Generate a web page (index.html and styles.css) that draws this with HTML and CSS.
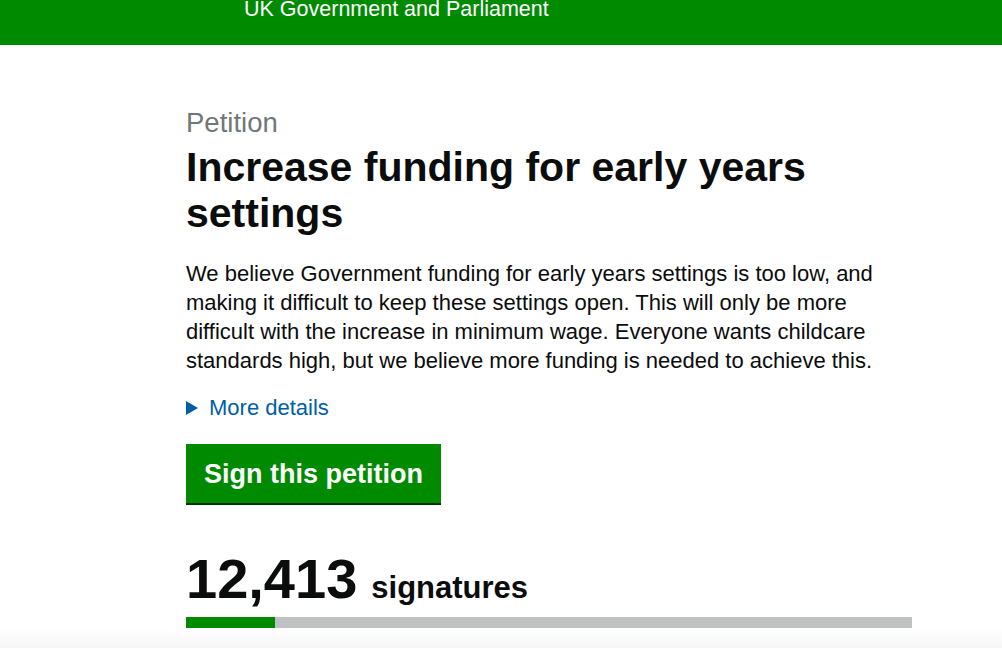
FILE: index.html
```html
<!doctype html>
<html lang="en">
    <head>
        <meta charset="utf-8">
        <title>Increase funding for early years settings - Petitions</title>
        <meta name="viewport" content="width=device-width, initial-scale=1">
        <link rel="stylesheet" href="styles.css">
    </head>
    <body>
        <header class="masthead">
            <div class="masthead-title">UK Government and Parliament</div>
        </header>
        <main class="petition">
            <span class="petition-label">Petition</span>
            <h1 class="petition-title">Increase funding for early years settings</h1>
            <p class="petition-action">
                We believe Government funding for early years settings is too low, and making it difficult to keep these settings open. This will only be more difficult with the increase in minimum wage. Everyone wants childcare standards high, but we believe more funding is needed to achieve this.
            </p>
            <div class="details-toggle">
                <span class="arrow"></span><a href="#">More details</a>
            </div>
            <a class="button" href="#">Sign this petition</a>
            <div class="signature-count">
                <span class="count">12,413</span>
                <span class="count-label">signatures</span>
            </div>
            <div class="progress">
                <div class="progress-fill" style="width: 12.3%;"></div>
            </div>
        </main>
        <div class="fade"></div>
    </body>
</html>
```

FILE: styles.css
```css
html {
    height: 100%;
    overflow: hidden;
}
body {
    margin: 0;
    background: #fff;
    color: #0b0c0c;
    font-family: "Liberation Sans", Arial, sans-serif;
}

.masthead {
    background: #008a00;
    height: 46px;
}
.masthead-title {
    color: white;
    font-size: 21.5px;
    line-height: 20px;
    padding-left: 244px;
    margin-top: -1px;
}

.petition {
    margin-left: 186px;
    width: 726px;
    padding-top: 62px;
}
.petition-label {
    display: block;
    color: #6f777b;
    font-size: 27.5px;
    line-height: 32px;
}
.petition-title {
    font-size: 41px;
    line-height: 46px;
    font-weight: bold;
    margin: 5px 0 0 0;
    padding-right: 60px;
}
.petition-action {
    font-size: 22px;
    line-height: 29px;
    margin: 23px 0 0 0;
}
.details-toggle {
    margin-top: 18px;
    font-size: 22px;
    line-height: 30px;
    display: flex;
    align-items: center;
}
.details-toggle a {
    color: #005ea5;
    text-decoration: none;
}
.arrow {
    width: 0;
    height: 0;
    border-top: 7px solid transparent;
    border-bottom: 7px solid transparent;
    border-left: 12px solid #005ea5;
    margin-right: 11px;
}
.button {
    display: inline-block;
    margin-top: 21px;
    background: #008a00;
    color: white;
    font-size: 27px;
    font-weight: bold;
    line-height: 32px;
    padding: 14px 18px 13px 18px;
    border-bottom: 2px solid #003300;
    text-decoration: none;
}
.signature-count {
    margin-top: 44px;
    display: flex;
    align-items: baseline;
    gap: 14px;
}
.count {
    font-size: 56px;
    font-weight: bold;
    line-height: 60px;
}
.count-label {
    font-size: 31px;
    font-weight: bold;
}
.progress {
    margin-top: 8px;
    height: 11px;
    background: #bfc1c3;
}
.progress-fill {
    height: 100%;
    background: #008a00;
}

.fade {
    position: fixed;
    left: 0;
    right: 0;
    bottom: 0;
    height: 20px;
    background: linear-gradient(to bottom, #ffffff, #f6f6f6);
}
```
